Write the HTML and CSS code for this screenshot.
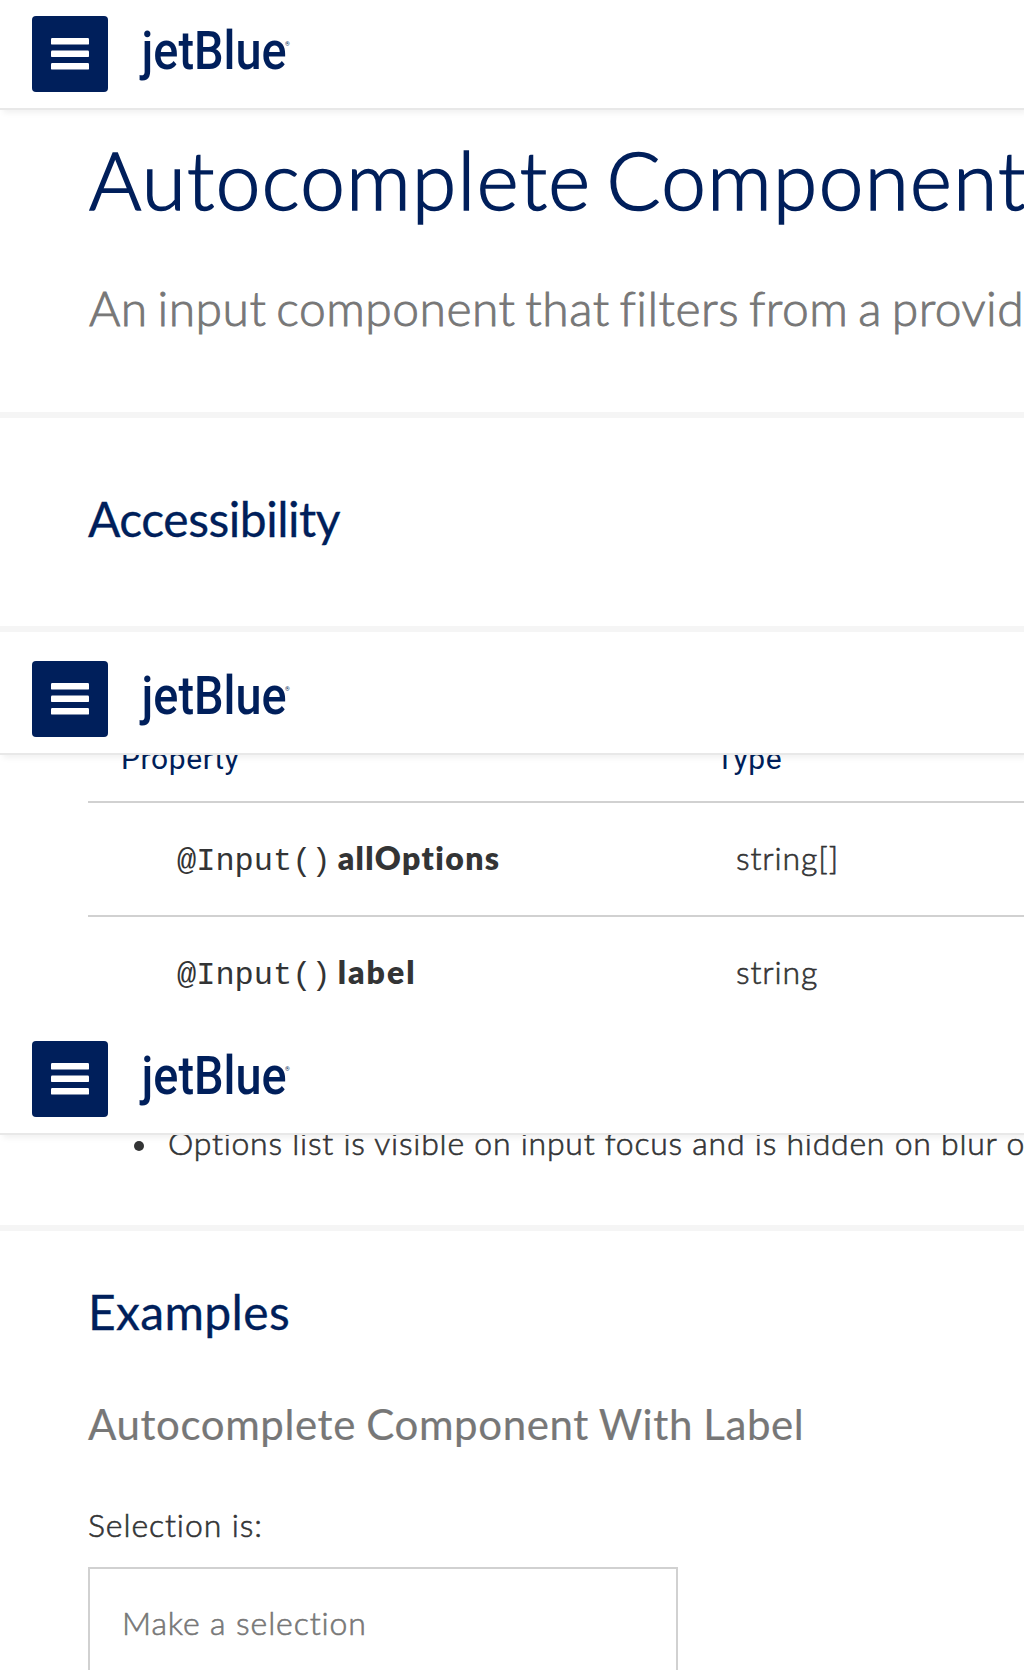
FILE: index.html
```
<!DOCTYPE html>
<html lang="en">
<head>
<meta charset="utf-8">
<title>Autocomplete Component</title>
<link rel="stylesheet" href="styles.css">
</head>
<body>
<svg class="defs" aria-hidden="true">
  <symbol id="menu" viewBox="0 0 38 32">
    <rect width="38" height="6.6" rx="1.2"/>
    <rect y="12.5" width="38" height="6.6" rx="1.2"/>
    <rect y="25" width="38" height="6.6" rx="1.2"/>
  </symbol>
</svg>

<div class="screen screen-intro">
  <header class="bar">
    <button class="menu" aria-label="Menu"><svg class="menu-icon"><use href="#menu"/></svg></button>
    <svg class="logo" viewBox="0 0 152 76"><text class="logo-name" x="1.6" y="53" textLength="145" lengthAdjust="spacingAndGlyphs">jetBlue</text><text class="logo-mark" x="145" y="29.5">®</text></svg>
  </header>
  <section class="panel hero">
    <h1 class="title">Autocomplete Component</h1>
    <p class="lead">An input component that filters from a provided</p>
  </section>
  <section class="panel access">
    <h2 class="heading tight">Accessibility</h2>
  </section>
</div>

<div class="screen screen-table">
  <header class="bar">
    <button class="menu" aria-label="Menu"><svg class="menu-icon"><use href="#menu"/></svg></button>
    <svg class="logo" viewBox="0 0 152 76"><text class="logo-name" x="1.6" y="53" textLength="145" lengthAdjust="spacingAndGlyphs">jetBlue</text><text class="logo-mark" x="145" y="29.5">®</text></svg>
  </header>
  <div class="props">
    <div class="props-head"><span>Property</span><span>Type</span></div>
    <div class="props-row"><span><code>@Input()</code><b>allOptions</b></span><span>string[]</span></div>
    <div class="props-row"><span><code>@Input()</code><b class="wide">label</b></span><span>string</span></div>
  </div>
</div>

<div class="screen screen-examples">
  <header class="bar">
    <button class="menu" aria-label="Menu"><svg class="menu-icon"><use href="#menu"/></svg></button>
    <svg class="logo" viewBox="0 0 152 76"><text class="logo-name" x="1.6" y="53" textLength="145" lengthAdjust="spacingAndGlyphs">jetBlue</text><text class="logo-mark" x="145" y="29.5">®</text></svg>
  </header>
  <section class="panel notes">
    <ul class="list"><li class="item"><i class="dot"></i><span>Options list is visible on input focus and is hidden on blur or</span></li></ul>
  </section>
  <section class="examples">
    <h2 class="heading">Examples</h2>
    <h3 class="subheading">Autocomplete Component With Label</h3>
    <p class="selection">Selection is:</p>
    <div class="field">Make a selection</div>
  </section>
</div>
</body>
</html>
```
FILE: styles.css
```
* { box-sizing: border-box; margin: 0; padding: 0; }
body {
  width: 1024px;
  overflow-x: hidden;
  background: #fff;
  color: #333435;
  font: 300 32px/38px Lato, "Open Sans", sans-serif;
  letter-spacing: 0.9px;
  -webkit-text-stroke: 0.6px currentColor;
}
.defs { display: none; }
.screen { overflow: hidden; background: #fff; }
.screen-intro { height: 645px; }
.screen-table { height: 380px; }
.screen-examples { height: 645px; }

.bar {
  position: relative;
  z-index: 1;
  display: flex;
  gap: 32px;
  height: 110px;
  padding: 16px 32px;
  background: #fff;
  border-bottom: 2px solid #e8e8e8;
  box-shadow: 3px 3px 6px rgba(0, 0, 0, 0.06);
}
.menu {
  display: flex;
  align-items: center;
  justify-content: center;
  width: 76px;
  height: 76px;
  border: 0;
  border-radius: 4px;
  background: #001f5b;
}
.menu-icon { width: 38px; height: 32px; fill: #fff; }
.logo { width: 152px; height: 76px; fill: #001f5b; overflow: visible; }
.logo-name { font: 500 54px Roboto, sans-serif; letter-spacing: 0; -webkit-text-stroke: 0.9px #001f5b; }
.logo-mark { font: 400 6px Roboto, sans-serif; letter-spacing: 0; -webkit-text-stroke: 0; }

.panel { border-bottom: 6px solid #f5f5f5; }
.hero { height: 308px; padding: 21px 0 0 89px; white-space: nowrap; }
.title {
  color: #001f5b;
  font-size: 80px;
  font-weight: 300;
  line-height: 96px;
  letter-spacing: 1.4px;
  word-spacing: -8px;
  -webkit-text-stroke-width: 1.6px;
}
.lead {
  margin-top: 52px;
  color: #777;
  font-size: 48px;
  line-height: 58px;
  letter-spacing: 0.5px;
  word-spacing: -3.7px;
  -webkit-text-stroke-width: 0.9px;
}
.access { height: 214px; padding: 72px 0 0 88px; }
.heading {
  color: #001f5b;
  font-size: 48px;
  font-weight: 400;
  line-height: 58px;
  letter-spacing: 0.35px;
  -webkit-text-stroke-width: 0.3px;
}
.tight { letter-spacing: -0.5px; }

.props { margin: -14px 0 0 88px; }
.props-head, .props-row { display: grid; grid-template-columns: 595px 1fr; }
.props-head {
  height: 60px;
  padding-left: 33px;
  color: #001f5b;
  font: 400 30px/36px Roboto, sans-serif;
  letter-spacing: 0.6px;
  -webkit-text-stroke-width: 0;
}
.props-row { height: 114px; padding: 36px 0 0 89px; border-top: 2px solid #d1d1d1; grid-template-columns: 559px 1fr; }
.props-row code {
  font: 400 32px/38px "Liberation Mono", monospace;
  letter-spacing: 0;
  -webkit-text-stroke-width: 0;
}
.props-row b { margin-left: 7px; font-weight: 800; letter-spacing: 1.4px; -webkit-text-stroke-width: 0; }
.props-row .wide { letter-spacing: 2px; }

.notes { display: flow-root; height: 96px; }
.list { margin: -11px 0 0 134px; list-style: none; white-space: nowrap; }
.item { display: flex; align-items: center; gap: 24px; letter-spacing: 0.75px; }
.dot { flex: none; width: 10px; height: 10px; margin-top: 6px; border-radius: 50%; background: #333435; }

.examples { padding: 52px 0 0 88px; }
.subheading { margin-top: 58px; color: #777; font-size: 42px; font-weight: 400; line-height: 50px; letter-spacing: 0.6px; word-spacing: -1px; -webkit-text-stroke-width: 0.2px; }
.selection { margin-top: 57px; }
.field { width: 590px; height: 120px; margin-top: 23px; padding: 35px 32px; border: 2px solid #d1d1d1; color: #777; }
```
